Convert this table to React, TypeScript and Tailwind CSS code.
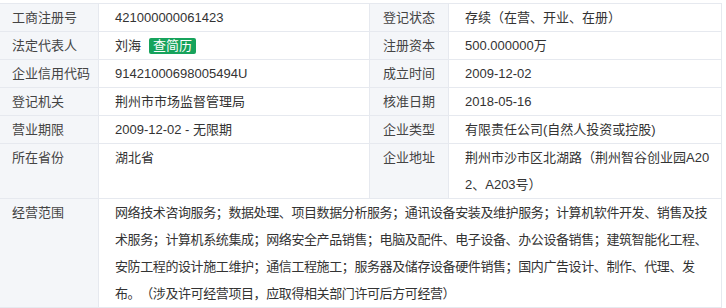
import React, { FC, ReactNode } from "react";

type Row = {
  l1: string;
  v1: ReactNode;
  l2: string;
  v2: ReactNode;
};

const rows: Row[] = [
  { l1: "工商注册号", v1: "421000000061423", l2: "登记状态", v2: "存续（在营、开业、在册）" },
  {
    l1: "法定代表人",
    v1: (
      <span className="flex items-center">
        刘海
        <span className="ml-2 rounded-[2px] bg-[#17a35c] px-1 text-[13px] leading-[16px] text-white">查简历</span>
      </span>
    ),
    l2: "注册资本",
    v2: "500.000000万",
  },
  { l1: "企业信用代码", v1: "91421000698005494U", l2: "成立时间", v2: "2009-12-02" },
  { l1: "登记机关", v1: "荆州市市场监督管理局", l2: "核准日期", v2: "2018-05-16" },
  { l1: "营业期限", v1: "2009-12-02 - 无限期", l2: "企业类型", v2: "有限责任公司(自然人投资或控股)" },
  {
    l1: "所在省份",
    v1: "湖北省",
    l2: "企业地址",
    v2: (
      <>
        荆州市沙市区北湖路（荆州智谷创业园A20
        <br />
        2、A203号）
      </>
    ),
  },
];

const scope = [
  "网络技术咨询服务；数据处理、项目数据分析服务；通讯设备安装及维护服务；计算机软件开发、销售及技",
  "术服务；计算机系统集成；网络安全产品销售；电脑及配件、电子设备、办公设备销售；建筑智能化工程、",
  "安防工程的设计施工维护；通信工程施工；服务器及储存设备硬件销售；国内广告设计、制作、代理、发",
  "布。（涉及许可经营项目，应取得相关部门许可后方可经营）",
];

const label = "border-b border-r border-[#e6e9ef] bg-[#f4f6f9] text-[#444]";
const value = "border-b border-r border-[#e6e9ef] bg-white pl-4 text-[#333]";

const App: FC = () => {
  return (
    <div className="min-h-screen w-[726px] bg-white pt-[3px] font-['Liberation_Sans','Noto_Sans_CJK_SC',sans-serif] text-[13px] leading-[27px] [text-spacing-trim:space-all]">
      <div className="grid w-[722px] grid-cols-[99px_271px_79px_273px] border-t border-[#e6e9ef]">
        {rows.map((r) => (
          <React.Fragment key={r.l1}>
            <div className={`${label} pl-3`}>{r.l1}</div>
            <div className={value}>{r.v1}</div>
            <div className={`${label} pl-[13px]`}>{r.l2}</div>
            <div className={`${value} whitespace-nowrap`}>{r.v2}</div>
          </React.Fragment>
        ))}
        <div className={`${label} pl-3`}>经营范围</div>
        <div className={`${value} col-span-3 whitespace-nowrap tracking-[-0.4px]`}>
          {scope.map((line) => (
            <div key={line}>{line}</div>
          ))}
        </div>
      </div>
    </div>
  );
};

export default App;
